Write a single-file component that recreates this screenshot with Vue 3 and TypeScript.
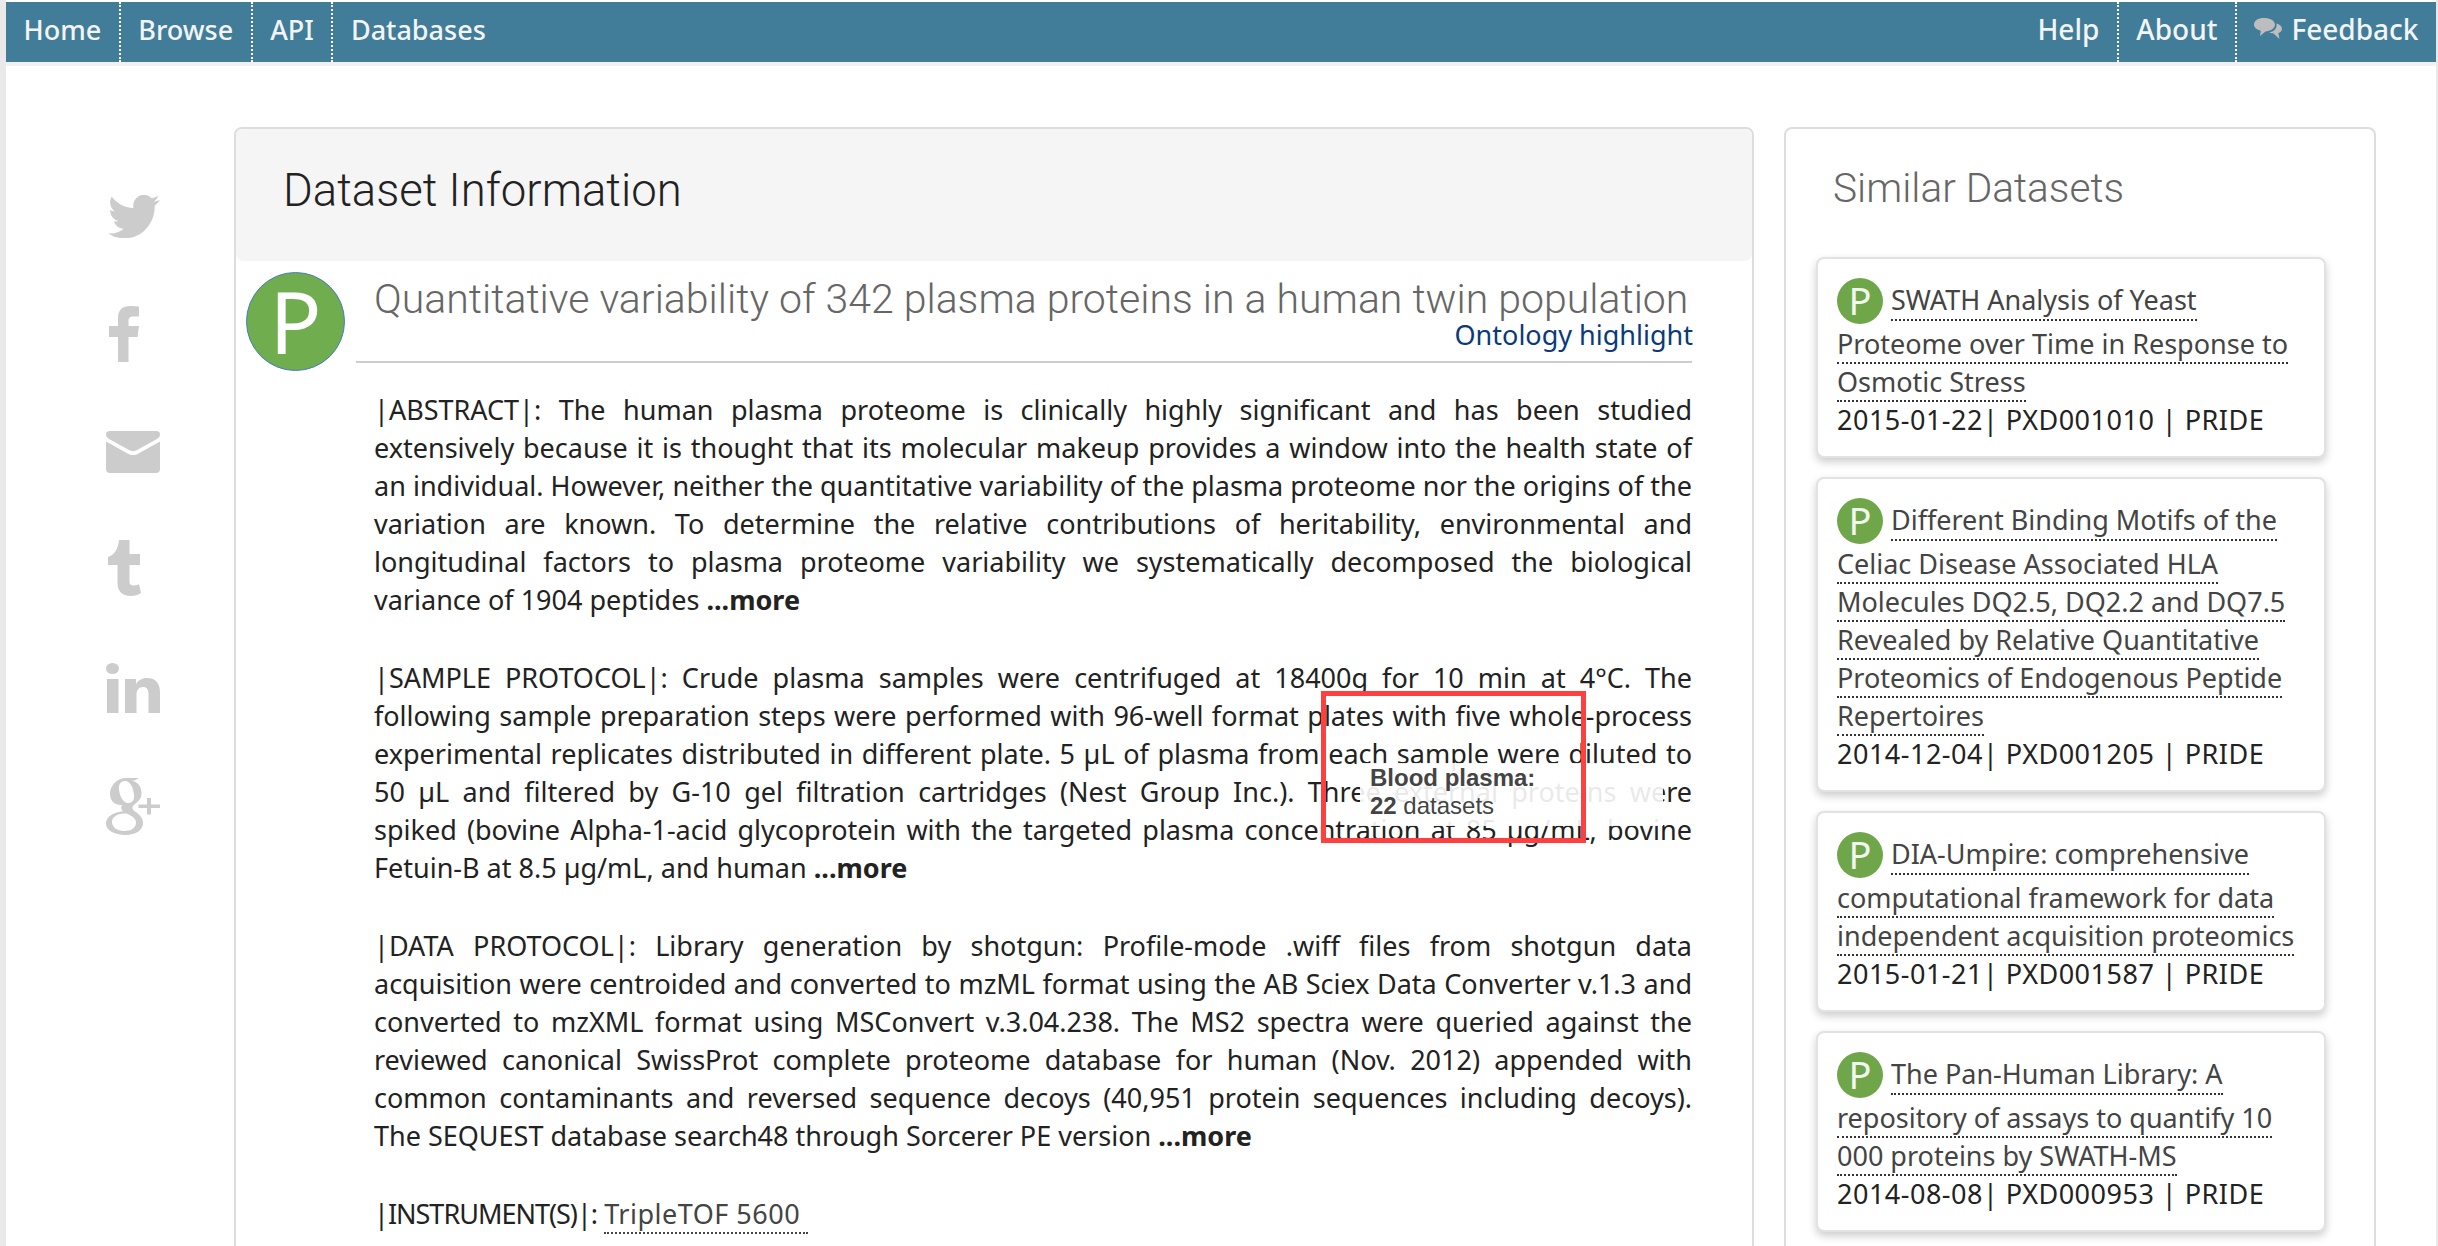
<script setup lang="ts">
interface Para {
  lines: string[]
  last: string
  more: string
}

interface Similar {
  id: string
  title: string[]
  date: string
}

const leftNav = ['Home', 'Browse', 'API', 'Databases']

const paragraphs: Para[] = [
  {
    lines: [
      '|ABSTRACT|: The human plasma proteome is clinically highly significant and has been studied',
      'extensively because it is thought that its molecular makeup provides a window into the health state of',
      'an individual. However, neither the quantitative variability of the plasma proteome nor the origins of the',
      'variation are known. To determine the relative contributions of heritability, environmental and',
      'longitudinal factors to plasma proteome variability we systematically decomposed the biological'
    ],
    last: 'variance of 1904 peptides ',
    more: '...more'
  },
  {
    lines: [
      '|SAMPLE PROTOCOL|: Crude plasma samples were centrifuged at 18400g for 10 min at 4°C. The',
      'following sample preparation steps were performed with 96-well format plates with five whole-process',
      'experimental replicates distributed in different plate. 5 µL of plasma from each sample were diluted to',
      '50 µL and filtered by G-10 gel filtration cartridges (Nest Group Inc.). Three external proteins were',
      'spiked (bovine Alpha-1-acid glycoprotein with the targeted plasma concentration at 85 µg/mL, bovine'
    ],
    last: 'Fetuin-B at 8.5 µg/mL, and human ',
    more: '...more'
  },
  {
    lines: [
      '|DATA PROTOCOL|: Library generation by shotgun: Profile-mode .wiff files from shotgun data',
      'acquisition were centroided and converted to mzML format using the AB Sciex Data Converter v.1.3 and',
      'converted to mzXML format using MSConvert v.3.04.238. The MS2 spectra were queried against the',
      'reviewed canonical SwissProt complete proteome database for human (Nov. 2012) appended with',
      'common contaminants and reversed sequence decoys (40,951 protein sequences including decoys).'
    ],
    last: 'The SEQUEST database search48 through Sorcerer PE version ',
    more: '...more'
  }
]

const similar: Similar[] = [
  {
    id: 'PXD001010',
    date: '2015-01-22',
    title: ['SWATH Analysis of Yeast', 'Proteome over Time in Response to', 'Osmotic Stress']
  },
  {
    id: 'PXD001205',
    date: '2014-12-04',
    title: [
      'Different Binding Motifs of the',
      'Celiac Disease Associated HLA',
      'Molecules DQ2.5, DQ2.2 and DQ7.5',
      'Revealed by Relative Quantitative',
      'Proteomics of Endogenous Peptide',
      'Repertoires'
    ]
  },
  {
    id: 'PXD001587',
    date: '2015-01-21',
    title: ['DIA-Umpire: comprehensive', 'computational framework for data', 'independent acquisition proteomics']
  },
  {
    id: 'PXD000953',
    date: '2014-08-08',
    title: ['The Pan-Human Library: A', 'repository of assays to quantify 10', '000 proteins by SWATH-MS']
  }
]
</script>

<template>
  <div class="page">
    <nav class="topnav">
      <div class="nav-group">
        <a v-for="item in leftNav" :key="item" class="nav-item">{{ item }}</a>
      </div>
      <div class="nav-group nav-right">
        <a class="nav-item">Help</a>
        <a class="nav-item">About</a>
        <a class="nav-item feedback">
          <svg class="chat-icon" viewBox="0 0 28 22" width="28" height="22">
            <path d="M10 0c6 0 11 2.600 11 6.600s-5 6.800-9.500 6.800L6 18l.8-5.200C3 12 0 10 0 6.600 0 2.600 4 0 10 0z" />
            <path d="M22.500 5.500c3 .8 5.500 2.600 5.500 5.200 0 2.200-1.600 3.800-3.600 4.400l1 6-6.200-5.800c-1.600 0-3-.3-4-1 4.500-.5 8-3.300 7.300-8.800z" />
          </svg>
          Feedback
        </a>
      </div>
    </nav>

    <div class="content">
      <aside class="share">
        <div class="share-item">
          <svg viewBox="44 20 1576 1265" width="52" height="43" preserveAspectRatio="none" class="shift-bird">
            <path d="M1620 166q-67 98-162 167 1 14 1 42 0 130-38 259.500t-115.500 248.500-184.500 210.500-258 146-323 54.500q-271 0-496-145 35 4 76 4 225 0 401-138-105-2-188-64.500t-114-159.500q33 5 61 5 43 0 85-11-112-23-185.500-111.500t-73.500-205.500v-4q68 38 146 41-66-44-105-115t-39-154q0-88 44-163 121 149 294.500 238.500t371.500 99.500q-8-38-8-74 0-134 94.500-228.500t228.500-94.500q140 0 236 102 109-21 205-78-37 115-142 178 97-10 194-52z" />
          </svg>
        </div>
        <div class="share-item">
          <svg viewBox="0 0 30 56" width="30" height="56" class="shift-f">
            <path d="M9 56V31H0V20h9v-8C9 3.500 14 0 21 0c3.500 0 7 .3 9 .6v10h-5.500C20.500 10.600 19.500 12.500 19.500 15v5H30l-1.500 11h-9v25z" />
          </svg>
        </div>
        <div class="share-item">
          <svg viewBox="0 0 54 42" width="54" height="42">
            <path d="M4 0h46c3 0 4 1.500 4 3.500 0 2-1.500 3.500-3.500 4.800L31 19c-2.500 1.500-5.500 1.500-8 0L3.500 8.300C1.500 7 0 5.500 0 3.500 0 1.500 1 0 4 0z" />
            <path d="M0 10.500l21.500 12c3.500 2 7.500 2 11 0L54 10.500V38c0 2.500-1.500 4-4 4H4c-2.500 0-4-1.500-4-4z" />
          </svg>
        </div>
        <div class="share-item">
          <svg viewBox="0 0 33 56" width="33" height="56" class="shift-t">
            <path d="M11 0h10.500v14H32v11H21.500v16c0 3.500 1.500 4.500 4.500 4.500 2 0 3.500-.5 5-1.200L33 53c-2.500 2-6 3-10 3-9 0-13.500-5-13.500-13V25H0v-8c5-1.500 10-6 11-17z" />
          </svg>
        </div>
        <div class="share-item">
          <svg viewBox="0 0 54 50" width="54" height="50">
            <ellipse cx="6.500" cy="5.500" rx="6.500" ry="5.500" />
            <path d="M1 16h11.500v34H1zM19 16h11v5c2-3.500 6-6 11-6 9 0 13 5.500 13 14.500V50H42.500V31c0-4.500-1.800-7-5.500-7-4 0-6.500 3-6.500 7.500V50H19z" />
          </svg>
        </div>
        <div class="share-item">
          <svg viewBox="0 0 54 57" width="54" height="57">
            <path d="M33 0l-4.500 2.500h-3C33 4 35.500 10 35.500 15.500c0 5-3.500 8-6.500 10.500-1.800 1.500-2.500 2.500-2.500 4 0 2 2 3 4 4.500 4 3 6.500 6 6.500 10.500 0 7-7 12-17.500 12C8 56.500 0 52.500 0 45.500c0-7.500 8.500-11.500 17-12-1-1.200-1.800-2.500-1.800-4 0-1 .3-1.800.7-2.500C8 27.500 4 22 4 16 4 7.500 11 0 20.500 0zM19 3c-5 0-6.500 4.500-6 8.500.7 6 3.500 13.500 9.500 13.500 5 0 6-4.500 5.500-8.500C27.300 10.500 24.500 3 19 3zm-.5 32.500C12 35.500 6 38.500 6 44c0 5 5 9 12 9 7.500 0 12-3.500 12-8.500 0-3.500-3-6-8-8.500-1-.4-2.200-.5-3.500-.5z" />
            <path d="M41 20h4v6.500h9v3.500h-9v6.500h-4V30h-8.500v-3.500H41z" />
          </svg>
        </div>
      </aside>

      <main class="panel main-panel">
        <header class="panel-head">
          <h2>Dataset Information</h2>
        </header>

        <div class="title-row">
          <div class="repo-logo"><span>P</span></div>
          <div class="title-block">
            <h1>Quantitative variability of 342 plasma proteins in a human twin population</h1>
            <div class="ontology">Ontology highlight</div>
            <hr />
          </div>
        </div>

        <section class="body-text">
          <div v-for="(p, i) in paragraphs" :key="i" class="para">
            <div v-for="line in p.lines" :key="line" class="just-line">{{ line }}</div>
            <div class="last-line">{{ p.last }}<b>{{ p.more }}</b></div>
          </div>
          <div class="para">
            <div class="last-line"><span class="instr-label">|INSTRUMENT(S)|:</span> <a class="instrument">TripleTOF 5600&nbsp;</a></div>
          </div>
        </section>

        <div class="tip">
          <b>Blood plasma:</b><br />
          <b>22</b> datasets
        </div>
        <div class="red-box"></div>
      </main>

      <aside class="panel side-panel">
        <h3>Similar Datasets</h3>
        <div v-for="item in similar" :key="item.id" class="card">
          <template v-for="(line, idx) in item.title" :key="line">
            <div v-if="idx === 0" class="card-first">
              <span class="mini-logo">P</span>
              <a class="card-link">{{ line }}</a>
            </div>
            <div v-else class="card-line"><a class="card-link">{{ line }}</a></div>
          </template>
          <div class="card-line meta">{{ item.date }}| {{ item.id }} | PRIDE</div>
        </div>
      </aside>
    </div>
  </div>
</template>

<style>
html,
body {
  height: 1246px;
  overflow: hidden;
  background: #e9e9e9;
}
</style>

<style scoped>
.page {
  margin: 0 2px 0 6px;
  height: 1246px;
  overflow: hidden;
  background: #fff;
  font-family: 'Noto Sans', 'DejaVu Sans', sans-serif;
  font-size: 27px;
  color: #222;
}

.topnav {
  height: 60px;
  margin-top: 2px;
  display: flex;
  justify-content: space-between;
  background: #417c99;
  border-bottom: 4px solid #f1f1f1;
  box-sizing: content-box;
}

.nav-group {
  display: flex;
}

.nav-item {
  display: flex;
  align-items: center;
  gap: 9px;
  padding: 0 17.500px 6px;
  color: #f2f4f5;
  font-size: 27px;
  font-weight: 500;
  border-right: 2px dotted #fff;
}

.nav-right .nav-item {
  font-size: 28px;
}

.nav-group:first-child .nav-item:last-child,
.feedback {
  border-right: none;
}

.chat-icon {
  fill: #bdbdbd;
}

.content {
  display: flex;
  align-items: flex-start;
  padding-top: 61px;
}

.share {
  width: 228px;
  flex-shrink: 0;
  padding: 30px 0 0 100px;
  box-sizing: border-box;
}

.share-item {
  height: 118px;
  display: flex;
  align-items: center;
}

.share-item svg {
  fill: #ccc;
}

.shift-f {
  margin-left: 3px;
}

.shift-bird {
  margin-left: 2px;
}

.shift-t {
  margin: -4px 0 0 2px;
}

.panel {
  box-sizing: border-box;
  border: 2px solid #ddd;
  border-radius: 8px;
  background: #fff;
}

.main-panel {
  position: relative;
  width: 1520px;
  height: 1300px;
}

.panel-head {
  height: 132px;
  box-sizing: border-box;
  background: #f5f5f5;
  border-radius: 6px 6px 8px 8px;
  display: flex;
  align-items: center;
  padding: 0 0 9px 47px;
}

.panel-head h2 {
  margin: 0;
  font-family: Roboto, 'Liberation Sans', sans-serif;
  font-weight: 300;
  font-size: 45.500px;
  color: #222;
}

.title-row {
  display: flex;
  padding: 11px 0 0 10px;
}

.repo-logo {
  width: 99px;
  height: 99px;
  box-sizing: border-box;
  flex-shrink: 0;
  border-radius: 50%;
  background: #70ad4f;
  border: 1px solid #4a7ebb;
  color: #fff;
  font-size: 86px;
  font-weight: 400;
  line-height: 95px;
  text-align: center;
}

.title-block {
  width: 1336px;
  margin-left: 11px;
  padding-top: 6px;
}

.title-block h1 {
  margin: 0;
  padding-left: 18px;
  font-family: Roboto, 'Liberation Sans', sans-serif;
  font-weight: 300;
  font-size: 41px;
  line-height: 42px;
  color: #666;
  white-space: nowrap;
}

.ontology {
  text-align: right;
  color: #0b3a7a;
  line-height: 30px;
  margin-right: -1px;
}

.title-block hr {
  margin: 11px 0 0;
  border: none;
  border-top: 2px solid #ccc;
}

.body-text {
  margin: 20px 0 0 138px;
  width: 1318px;
  line-height: 38px;
}

.para {
  margin-bottom: 40px;
}

.just-line {
  text-align: justify;
  text-align-last: justify;
}

.last-line {
  white-space: nowrap;
}

.instr-label {
  letter-spacing: -1px;
}

.instrument {
  border-bottom: 2px dotted #444;
  color: #444;
  letter-spacing: 0.5px;
}

.tip {
  position: absolute;
  left: 1124px;
  top: 634px;
  width: 303px;
  height: 63px;
  box-sizing: border-box;
  padding: 1px 0 0 10px;
  background: rgba(255, 255, 255, 0.9);
  font-family: 'Liberation Sans', Arial, sans-serif;
  font-size: 24px;
  line-height: 28px;
  color: #444;
}

.red-box {
  position: absolute;
  left: 1085px;
  top: 562px;
  width: 265px;
  height: 152px;
  box-sizing: border-box;
  border: 5px solid #ff4040;
}

.side-panel {
  width: 592px;
  height: 1300px;
  margin-left: 30px;
  padding: 0 0 0 30px;
}

.side-panel h3 {
  margin: 0;
  height: 128px;
  padding: 35px 0 0 17px;
  box-sizing: border-box;
  font-family: Roboto, 'Liberation Sans', sans-serif;
  font-weight: 300;
  font-size: 40.600px;
  line-height: 48px;
  color: #666;
}

.card {
  width: 510px;
  box-sizing: border-box;
  padding: 19px 19px 17px;
  margin-bottom: 19px;
  border: 2px solid #e2e2e2;
  border-radius: 8px;
  background: #fff;
  box-shadow: 0 4px 9px rgba(0, 0, 0, 0.2);
  white-space: nowrap;
}

.card-first {
  height: 47px;
  display: flex;
  align-items: flex-start;
  gap: 8px;
  line-height: 38px;
}

.mini-logo {
  width: 46px;
  height: 46px;
  flex-shrink: 0;
  border-radius: 50%;
  background: #70a64a;
  color: #f1f6ee;
  font-size: 38px;
  font-weight: 400;
  line-height: 45px;
  text-align: center;
}

.card-line {
  line-height: 38px;
}

.card-first .card-link {
  margin-top: 3px;
}

.card-link {
  color: #444;
  border-bottom: 2px dotted #333;
}

.meta {
  color: #222;
  letter-spacing: 0.5px;
}
</style>
